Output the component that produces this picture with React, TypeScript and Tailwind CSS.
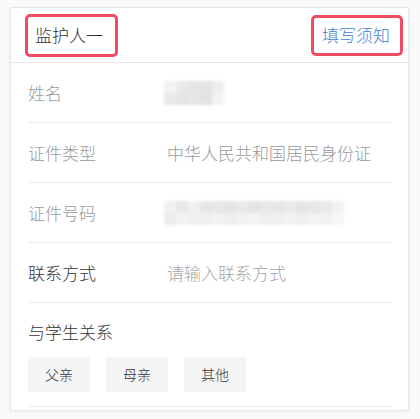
import React from "react";

const font = { fontFamily: '"Noto Sans CJK SC", "Noto Sans", sans-serif' };

function Mosaic({ rows }: { rows: string[][] }) {
  return (
    <div className="flex flex-col blur-[1.5px]">
      {rows.map((r, i) => (
        <div key={i} className="flex">
          {r.map((c, j) => (
            <div key={j} className="w-[12px] h-[12px]" style={{ background: c }} />
          ))}
        </div>
      ))}
    </div>
  );
}

function Row({ label, dark, children }: { label: string; dark?: boolean; children: React.ReactNode }) {
  return (
    <div className="h-[60px] flex items-center border-b border-[#ebebeb]">
      <div className={`w-[139px] text-[17px] ${dark ? "text-[#333]" : "text-[#9a9a9a]"}`}>{label}</div>
      <div className="flex-1 flex items-center">{children}</div>
    </div>
  );
}

export default function App() {
  const nameRows = [
    ["#f3f3f3", "#e9e9e9", "#e5e5e5", "#e3e3e3", "#eeeeee"],
    ["#e9e9e9", "#e4e4e4", "#e6e6e6", "#e2e2e2", "#f3f3f3"],
  ];
  const idRows = [
    ["#f1f1f1", "#e8e8e8", "#f0f0f0", "#e5e5e5", "#e7e7e7", "#e4e4e4", "#e9e9e9", "#e3e3e3", "#e8e8e8", "#e6e6e6", "#eaeaea", "#e5e5e5", "#e7e7e7", "#e9e9e9", "#f2f2f2"],
    ["#ececec", "#f2f2f2", "#efefef", "#f0f0f0", "#f3f3f3", "#eeeeee", "#f1f1f1", "#f4f4f4", "#efefef", "#f0f0f0", "#f2f2f2", "#eeeeee", "#f3f3f3", "#f1f1f1", "#f6f6f6"],
  ];
  return (
    <div className="w-[420px] h-[419px] bg-[#fafafa] pt-[7px] pl-[10px] font-light" style={font}>
      <div className="w-[399px] h-[404px] bg-white border border-[#e6e6e6] shadow-[0_1px_4px_rgba(0,0,0,0.06)]">
        <div className="h-[55px] flex items-center justify-between border-b border-[#e6e6e6] pl-[14px] pr-[5px]">
          <div className="h-[43px] border-[3px] border-[#ec4d63] rounded-[5px] flex items-center pl-[7px] pr-[12px] text-[17px] text-[#333]">
            监护人一
          </div>
          <div className="h-[41px] border-[3px] border-[#ec4d63] rounded-[5px] flex items-center pl-[8px] pr-[10px] text-[17px] text-[#3f7fd6]">
            填写须知
          </div>
        </div>
        <div className="pl-[17px] pr-[16px]">
          <Row label="姓名">
            <div className="-ml-[3px]"><Mosaic rows={nameRows} /></div>
          </Row>
          <Row label="证件类型">
            <span className="text-[17px] text-[#9a9a9a]">中华人民共和国居民身份证</span>
          </Row>
          <Row label="证件号码">
            <div className="-ml-[3px]"><Mosaic rows={idRows} /></div>
          </Row>
          <Row label="联系方式" dark>
            <span className="text-[17px] text-[#a6a6a6]">请输入联系方式</span>
          </Row>
          <div className="pt-[16px] pb-[14px] border-b border-[#ebebeb]">
            <div className="text-[17px] text-[#333] leading-[26px]">与学生关系</div>
            <div className="flex gap-[16px] mt-[12px]">
              {["父亲", "母亲", "其他"].map((t) => (
                <div key={t} className="w-[62px] h-[35px] bg-[#f5f5f5] flex items-center justify-center text-[14px] text-[#333]">
                  {t}
                </div>
              ))}
            </div>
          </div>
        </div>
      </div>
    </div>
  );
}
